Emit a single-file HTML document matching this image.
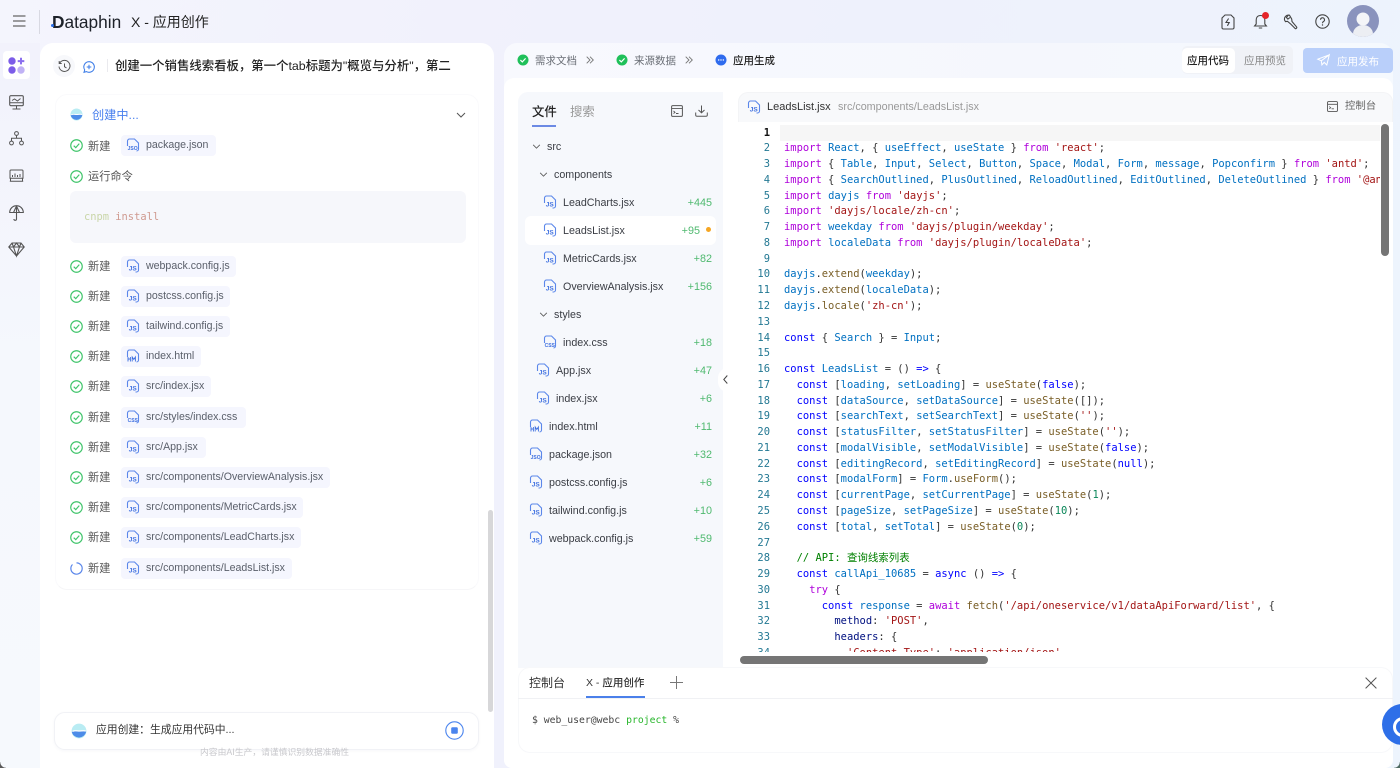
<!DOCTYPE html>
<html lang="zh-CN">
<head>
<meta charset="utf-8">
<title>Dataphin X - 应用创作</title>
<style>
*{box-sizing:border-box}
html,body{margin:0;padding:0;width:1400px;height:768px;overflow:hidden}
body{position:relative;font-family:"Liberation Sans","Noto Sans CJK SC",sans-serif;color:#333;
background:linear-gradient(100deg,#f4f5fd 0%,#f1f1fc 30%,#eef1fc 60%,#edf4fd 100%)}
.a{position:absolute;white-space:nowrap}
svg{display:block;overflow:visible}
.leftbg{position:absolute;left:0;top:43px;width:40px;height:725px;background:linear-gradient(180deg,#f2f2fc,#f5f8fd 45%,#f6f9fd)}
.panel-l{position:absolute;left:40px;top:43px;width:454px;height:725px;background:#fff;border-radius:13px 13px 0 0}
.panel-r{position:absolute;left:504px;top:43px;width:889px;height:725px;border-radius:13px 13px 8px 8px;background:linear-gradient(90deg,#f8f9fe,#f5f7fd 60%,#f5f9fe)}
.panel-w{position:absolute;left:504px;top:78px;width:889px;height:690px;background:#fff;border-radius:10px 10px 8px 8px}
.card{position:absolute;left:55px;top:94px;width:424px;height:496px;border:1px solid #fafafc;border-bottom-color:#f6f6f8;border-radius:12px}
.lbl{font-size:11.2px;color:#555;transform:translateY(1px)}
.chip{position:absolute;left:121px;height:21px;background:#f5f6fe;border-radius:4px;font-size:10.6px;color:#5a5f6a;line-height:20.500px;padding-left:25px;white-space:nowrap}
.chip svg{position:absolute;left:5px;top:3px}
.chk{position:absolute;left:70px}
.tree{position:absolute;left:518px;top:92px;width:205px;height:576px;background:#f6f8fc;border-radius:10px 0 0 0}
.rowhl{position:absolute;left:525px;top:216px;width:191px;height:29px;background:#fff;border-radius:6px}
.fn{position:absolute;font-size:10.7px;color:#3a3d44;white-space:nowrap;line-height:14px;transform:translateY(1px)}
.fi{position:absolute}
.ct{position:absolute;font-size:10.8px;color:#4fb96f;white-space:nowrap;line-height:14px;text-align:right;transform:translateY(1px)}
.codehead{position:absolute;left:738px;top:92px;width:655px;height:30px;background:#f8f9fb;border-radius:10px 10px 0 0;border:1px solid #f3f4f6;border-bottom:none}
.codeclip{position:absolute;left:738px;top:125.6px;width:642px;height:526.5px;overflow:hidden}
.nums,.code{position:absolute;top:0;margin:0;font-family:"DejaVu Sans Mono","Liberation Mono",monospace;font-size:10.46px;line-height:15.76px;white-space:pre}
.nums{left:0;width:32px;text-align:right;color:#237893}
.nums b{color:#111;font-weight:700}
.code{left:46px;color:#333}
.k{color:#af00db}.b{color:#0000ff}.v{color:#0070c1}.w{color:#001080}.s{color:#a31515}.f{color:#795e26}.c{color:#008000}.n{color:#098658}
</style>
</head>
<body>
<svg width="0" height="0" style="position:absolute">
<symbol id="ok" viewBox="0 0 14 14"><circle cx="7" cy="7" r="6.2" fill="none" stroke="#3fc46a" stroke-width="1.250"/><path d="M4 7.200l2.200 2.100 3.800-4.300" fill="none" stroke="#3fc46a" stroke-width="1.250"/></symbol>
<symbol id="js" viewBox="0 0 14 14"><path d="M1.500 8V3a2 2 0 0 1 2-2H8.500L12.500 5V11a2 2 0 0 1-2 2H9.500" fill="none" stroke="#5b87ea" stroke-width="1.100"/><text x="2.800" y="11.400" font-family="Liberation Sans" font-size="6.500" font-weight="700" fill="#3f70e0">JS</text></symbol>
<symbol id="jn" viewBox="0 0 14 14"><path d="M1.500 8V3a2 2 0 0 1 2-2H8.500L12.500 5V11a2 2 0 0 1-2 2" fill="none" stroke="#5b87ea" stroke-width="1.100"/><text x="1.600" y="12" font-family="Liberation Sans" font-size="5" font-weight="700" fill="#3f70e0">JSO</text></symbol>
<symbol id="ht" viewBox="0 0 14 14"><path d="M1.500 8V3a2 2 0 0 1 2-2H8.500L12.500 5V11a2 2 0 0 1-2 2" fill="none" stroke="#5b87ea" stroke-width="1.100"/><path d="M2 12.500V8M2 10h2.400M4.400 12.500V8M6.200 12.500V8l1.600 2.400L9.400 8v4.500" fill="none" stroke="#3f70e0" stroke-width=".9"/></symbol>
<symbol id="cs" viewBox="0 0 14 14"><path d="M1.500 8V3a2 2 0 0 1 2-2H8.500L12.500 5V11a2 2 0 0 1-2 2" fill="none" stroke="#5b87ea" stroke-width="1.100"/><text x="1.600" y="12" font-family="Liberation Sans" font-size="5" font-weight="700" fill="#3f70e0">CSS</text></symbol>
<symbol id="ch" viewBox="0 0 10 6"><path d="M1 1l4 4 4-4" fill="none" stroke="#555" stroke-width="1"/></symbol>
<symbol id="glb" viewBox="0 0 16 16"><circle cx="8" cy="8" r="7.400" fill="#b9ecf3"/><path d="M.8 9c2.500-2 4.500-.6 7.200-.6S13 7.600 15.200 8.800 A7.400 7.400 0 0 1 .8 9z" fill="#4d8ce8"/><path d="M1.500 8.400c2.500-1.200 4.500-.4 6.700-.4s4.600-.7 6.500 0" stroke="#fff" stroke-width="1.200" fill="none"/></symbol>
</svg>

<!-- top bar -->
<svg class="a" style="left:13px;top:15px" width="13" height="12"><path d="M0 1h12.500M0 6h12.500M0 11h12.500" stroke="#666" stroke-width="1.200"/></svg>
<div class="a" style="left:39px;top:10px;width:1px;height:24px;background:#d8d9e2"></div>
<div class="a" style="left:52px;top:10px;font-size:17.300px;line-height:24px;color:#1d2129;"><span style="font-weight:700;">D</span>ataphin</div>
<div class="a" style="left:51px;top:24px;width:3px;height:3px;border-radius:50%;background:#2a6ee8"></div>
<div class="a" style="left:131px;top:11px;font-size:14px;line-height:22px;color:#222">X - 应用创作</div>

<svg class="a" style="left:1221px;top:14px" width="14" height="16" viewBox="0 0 14 16"><path d="M4 1h6l3 3v9.500A1.500 1.500 0 0 1 11.500 15h-9A1.500 1.500 0 0 1 1 13.500V4z" fill="none" stroke="#444" stroke-width="1.100"/><path d="M7.600 4.500L5 8.500h3.200L6.400 11.800" fill="none" stroke="#444" stroke-width="1.100"/></svg>
<svg class="a" style="left:1253px;top:13px" width="15" height="17" viewBox="0 0 15 17"><path d="M7.500 2.500c-3 0-4.300 2-4.300 4.500v4l-1.600 2h11.800l-1.600-2V7c0-2.500-1.300-4.500-4.300-4.500zM5.800 15h3.400" fill="none" stroke="#444" stroke-width="1.100"/></svg>
<div class="a" style="left:1262px;top:12px;width:7px;height:7px;border-radius:50%;background:#e5252a"></div>
<svg class="a" style="left:1283px;top:14px" width="16" height="16" viewBox="0 0 16 16"><path d="M6.500 1.200a4 4 0 0 0-4.800 5.200l.8 1.200 2-.3 3.300 2.800 4.200 4.300c1 .8 2.300-.6 1.500-1.600L9 7.500 8.700 5 6.500 1.200z M5.200 1.300L3.400 3.500l1.500 1.600L7 3.500" fill="none" stroke="#444" stroke-width="1.100"/></svg>
<svg class="a" style="left:1315px;top:14px" width="15" height="15" viewBox="0 0 15 15"><circle cx="7.500" cy="7.500" r="6.700" fill="none" stroke="#444" stroke-width="1.100"/><path d="M5.500 5.800a2 2 0 1 1 3 1.700c-.7.400-1 .8-1 1.700" fill="none" stroke="#444" stroke-width="1.100"/><circle cx="7.500" cy="11" r=".7" fill="#444"/></svg>
<svg class="a" style="left:1347px;top:5px" width="32" height="32" viewBox="0 0 32 32"><defs><clipPath id="av"><circle cx="16" cy="16" r="16"/></clipPath></defs><circle cx="16" cy="16" r="16" fill="#8a93bd"/><g clip-path="url(#av)"><circle cx="16" cy="14" r="6.500" fill="#f4f5f8"/><ellipse cx="16" cy="29" rx="10" ry="9" fill="#eceef3"/></g></svg>

<!-- left rail -->
<div class="leftbg"></div>
<div class="a" style="left:3px;top:51px;width:27px;height:28px;background:#fff;border-radius:4px"></div>
<svg class="a" style="left:8px;top:57px" width="17" height="17" viewBox="0 0 17 17"><circle cx="4" cy="4" r="3.700" fill="#7c5ce8"/><path d="M13 .8v6.600M9.700 4.100h6.600" stroke="#8b6fee" stroke-width="2"/><circle cx="4" cy="13" r="3.700" fill="#7c5ce8"/><circle cx="13" cy="13" r="3.700" fill="#c0b2f5"/></svg>
<svg class="a" style="left:9px;top:95px" width="15" height="15" viewBox="0 0 15 15"><rect x=".7" y=".7" width="13.600" height="10" rx="1.200" fill="none" stroke="#555" stroke-width="1.100"/><path d="M1 7.800h13M7.500 11v2.500M3.500 14h8M3 5.500l2.500-1.500 3 2 3-2.500" fill="none" stroke="#555" stroke-width="1"/></svg>
<svg class="a" style="left:9px;top:131px" width="15" height="15" viewBox="0 0 15 15"><circle cx="7.500" cy="2.500" r="1.900" fill="none" stroke="#555"/><circle cx="2.500" cy="12" r="1.900" fill="none" stroke="#555"/><circle cx="12.500" cy="12" r="1.900" fill="none" stroke="#555"/><path d="M7.500 4.500V7M2.500 10V7.200h10V10" fill="none" stroke="#555"/></svg>
<svg class="a" style="left:9px;top:169px" width="15" height="13" viewBox="0 0 15 13"><path d="M1 9V2a1 1 0 0 1 1-1h11a1 1 0 0 1 1 1v7M.5 9.200h14M.8 12.300h13.400M1.500 9.500v2.700M13.500 9.500v2.700M3.500 8V6M6 8V4.500M8.500 8V6M11 8V5" fill="none" stroke="#555" stroke-width="1"/></svg>
<svg class="a" style="left:9px;top:205px" width="15" height="16" viewBox="0 0 15 16"><path d="M.7 7.500a6.800 6.800 0 0 1 13.600 0zM7.500.7V14a1.300 1.300 0 0 1-2.600 0M4.500 7.500L7.500 1l3 6.500" fill="none" stroke="#555" stroke-width="1.100"/></svg>
<svg class="a" style="left:8px;top:242px" width="17" height="15" viewBox="0 0 17 15"><path d="M4 1h9l3.200 4-7.700 9L.8 5zM.8 5h15.400M5.500 5l3 9 3-9M4 1l1.500 4 3-4 3 4L13 1" fill="none" stroke="#555" stroke-width="1.100"/></svg>

<!-- left panel -->
<div class="panel-l"></div>
<div class="a" style="left:53px;top:55px;width:22px;height:22px;border-radius:50%;background:#f7f8fb"></div>
<svg class="a" style="left:58px;top:60px" width="13" height="13" viewBox="0 0 13 13"><path d="M1.800 3A5.500 5.500 0 1 1 1 6.500M1.200 1v2.500h2.500M6.500 3.500v3.200l2 1.300" fill="none" stroke="#555" stroke-width="1"/></svg>
<svg class="a" style="left:83px;top:60.500px" width="12" height="12" viewBox="0 0 12 12"><path d="M6 .7a5.300 5.300 0 1 1-2.600 9.900L1 11.300l.7-2.400A5.300 5.300 0 0 1 6 .7zM6 3.700v4.600M3.700 6h4.600" fill="none" stroke="#3f7ee8" stroke-width="1.050"/></svg>
<div class="a" style="left:107px;top:59px;width:1px;height:13px;background:#eaeaee"></div>
<div class="a" style="left:115px;top:56px;font-size:12.400px;line-height:20px;color:#222;font-weight:500">创建一个销售线索看板，第一个tab标题为"概览与分析"，第二</div>

<div class="card"></div>
<svg class="a" style="left:70px;top:108px" width="13" height="13"><use href="#glb"/></svg>
<div class="a" style="left:92px;top:106px;font-size:12.200px;line-height:18px;color:#4a80ee">创建中...</div>
<svg class="a" style="left:456px;top:112px" width="10" height="6"><use href="#ch"/></svg>

<svg class="chk a" style="top:139px" width="13" height="13"><use href="#ok"/></svg>
<div class="a lbl" style="left:88px;top:138px;line-height:16px">新建</div>
<div class="chip" style="top:135px;width:95px"><svg width="14" height="14"><use href="#jn"/></svg>package.json</div>

<svg class="chk a" style="top:170px" width="13" height="13"><use href="#ok"/></svg>
<div class="a lbl" style="left:88px;top:168px;line-height:16px">运行命令</div>
<div class="a" style="left:70px;top:191px;width:396px;height:52px;background:#f6f7fb;border-radius:6px"></div>
<div class="a" style="left:84px;top:210px;font-family:'DejaVu Sans Mono',monospace;font-size:10.400px;line-height:14px"><span style="color:#c9d6a8">cnpm</span> <span style="color:#cf9a90">install</span></div>

<svg class="chk a" style="top:260px" width="13" height="13"><use href="#ok"/></svg><div class="a lbl" style="left:88px;top:258px;line-height:16px">新建</div>
<div class="chip" style="top:256px;width:115px"><svg width="14" height="14"><use href="#js"/></svg>webpack.config.js</div>
<svg class="chk a" style="top:290px" width="13" height="13"><use href="#ok"/></svg><div class="a lbl" style="left:88px;top:288px;line-height:16px">新建</div>
<div class="chip" style="top:286px;width:109px"><svg width="14" height="14"><use href="#js"/></svg>postcss.config.js</div>
<svg class="chk a" style="top:320px" width="13" height="13"><use href="#ok"/></svg><div class="a lbl" style="left:88px;top:318px;line-height:16px">新建</div>
<div class="chip" style="top:316px;width:109px"><svg width="14" height="14"><use href="#js"/></svg>tailwind.config.js</div>
<svg class="chk a" style="top:350px" width="13" height="13"><use href="#ok"/></svg><div class="a lbl" style="left:88px;top:348px;line-height:16px">新建</div>
<div class="chip" style="top:346px;width:80px"><svg width="14" height="14"><use href="#ht"/></svg>index.html</div>
<svg class="chk a" style="top:380px" width="13" height="13"><use href="#ok"/></svg><div class="a lbl" style="left:88px;top:378px;line-height:16px">新建</div>
<div class="chip" style="top:376px;width:90px"><svg width="14" height="14"><use href="#js"/></svg>src/index.jsx</div>
<svg class="chk a" style="top:411px" width="13" height="13"><use href="#ok"/></svg><div class="a lbl" style="left:88px;top:409px;line-height:16px">新建</div>
<div class="chip" style="top:407px;width:125px"><svg width="14" height="14"><use href="#cs"/></svg>src/styles/index.css</div>
<svg class="chk a" style="top:441px" width="13" height="13"><use href="#ok"/></svg><div class="a lbl" style="left:88px;top:439px;line-height:16px">新建</div>
<div class="chip" style="top:437px;width:85px"><svg width="14" height="14"><use href="#js"/></svg>src/App.jsx</div>
<svg class="chk a" style="top:471px" width="13" height="13"><use href="#ok"/></svg><div class="a lbl" style="left:88px;top:469px;line-height:16px">新建</div>
<div class="chip" style="top:467px;width:209px"><svg width="14" height="14"><use href="#js"/></svg>src/components/OverviewAnalysis.jsx</div>
<svg class="chk a" style="top:501px" width="13" height="13"><use href="#ok"/></svg><div class="a lbl" style="left:88px;top:499px;line-height:16px">新建</div>
<div class="chip" style="top:497px;width:182px"><svg width="14" height="14"><use href="#js"/></svg>src/components/MetricCards.jsx</div>
<svg class="chk a" style="top:531px" width="13" height="13"><use href="#ok"/></svg><div class="a lbl" style="left:88px;top:529px;line-height:16px">新建</div>
<div class="chip" style="top:527px;width:180px"><svg width="14" height="14"><use href="#js"/></svg>src/components/LeadCharts.jsx</div>
<svg class="chk a" style="top:562px" width="13" height="13" viewBox="0 0 14 14"><path d="M7 .9A6.100 6.100 0 1 1 2.700 2.700" fill="none" stroke="#5b87ea" stroke-width="1.300"/></svg><div class="a lbl" style="left:88px;top:560px;line-height:16px">新建</div>
<div class="chip" style="top:558px;width:171px"><svg width="14" height="14"><use href="#js"/></svg>src/components/LeadsList.jsx</div>

<div class="a" style="left:488px;top:510px;width:5px;height:202px;background:#d7d7d9;border-radius:3px"></div>

<div class="a" style="left:54px;top:712px;width:425px;height:38px;background:#fff;border:1px solid #f1f2f6;border-radius:11px;box-shadow:0 1px 3px rgba(30,40,90,.04)"></div>
<svg class="a" style="left:71px;top:723px" width="16" height="16"><use href="#glb"/></svg>
<div class="a" style="left:96px;top:722px;font-size:10.800px;line-height:17px;color:#333">应用创建：生成应用代码中...</div>
<svg class="a" style="left:445px;top:721px" width="19" height="19" viewBox="0 0 19 19"><circle cx="9.500" cy="9.500" r="8.700" fill="none" stroke="#4a84ee" stroke-width="1.100"/><rect x="6.200" y="6.200" width="6.600" height="6.600" rx="1.200" fill="#4a84ee"/></svg>
<div class="a" style="left:200px;top:746px;font-size:8.800px;line-height:13px;color:#c9c9cd">内容由AI生产，请谨慎识别数据准确性</div>

<!-- right panel -->
<div class="panel-r"></div>
<div class="panel-w"></div>

<svg class="a" style="left:517px;top:54px" width="12" height="12" viewBox="0 0 12 12"><circle cx="6" cy="6" r="5.500" fill="#1fc05a"/><path d="M3.400 6.100l1.900 1.800 3.300-3.500" fill="none" stroke="#fff" stroke-width="1.200"/></svg>
<div class="a" style="left:535px;top:52.500px;font-size:10.500px;line-height:16px;color:#6b6f77">需求文档</div>
<svg class="a" style="left:586px;top:56px" width="8" height="8" viewBox="0 0 8 8"><path d="M.7.700L4 4 .7 7.300M4 .7L7.300 4 4 7.300" fill="none" stroke="#777" stroke-width=".9"/></svg>
<svg class="a" style="left:616px;top:54px" width="12" height="12" viewBox="0 0 12 12"><circle cx="6" cy="6" r="5.500" fill="#1fc05a"/><path d="M3.400 6.100l1.900 1.800 3.300-3.500" fill="none" stroke="#fff" stroke-width="1.200"/></svg>
<div class="a" style="left:634px;top:52.500px;font-size:10.500px;line-height:16px;color:#6b6f77">来源数据</div>
<svg class="a" style="left:685px;top:56px" width="8" height="8" viewBox="0 0 8 8"><path d="M.7.700L4 4 .7 7.300M4 .7L7.300 4 4 7.300" fill="none" stroke="#777" stroke-width=".9"/></svg>
<svg class="a" style="left:715px;top:54px" width="12" height="12" viewBox="0 0 12 12"><circle cx="6" cy="6" r="5.500" fill="#2f6bee"/><circle cx="3.700" cy="6" r=".7" fill="#fff"/><circle cx="6" cy="6" r=".7" fill="#fff"/><circle cx="8.300" cy="6" r=".7" fill="#fff"/></svg>
<div class="a" style="left:733px;top:52.500px;font-size:10.500px;line-height:16px;color:#222;font-weight:500">应用生成</div>

<div class="a" style="left:1182px;top:46px;width:111px;height:28px;background:#f0f2f7;border-radius:5px"></div>
<div class="a" style="left:1182px;top:48px;width:53px;height:25px;background:#fff;border-radius:5px"></div>
<div class="a" style="left:1187px;top:53px;font-size:10.500px;line-height:16px;color:#222;font-weight:500">应用代码</div>
<div class="a" style="left:1244px;top:53px;font-size:10.500px;line-height:16px;color:#888">应用预览</div>
<div class="a" style="left:1303px;top:48px;width:90px;height:25px;background:#b9cffa;border-radius:4px"></div>
<svg class="a" style="left:1317px;top:54px" width="13" height="13" viewBox="0 0 13 13"><path d="M12.300.8L.8 5.200l3.500 1.600L12.300.8 9.800 11l-2.600-2.600-2.300 2.500-.6-4" fill="none" stroke="#fff" stroke-width="1"/></svg>
<div class="a" style="left:1337px;top:54px;font-size:10.500px;line-height:16px;color:#fff">应用发布</div>

<!-- tree -->
<div class="tree"></div>
<div class="a" style="left:532px;top:103px;font-size:12.400px;line-height:18px;color:#222;font-weight:500">文件</div>
<div class="a" style="left:570px;top:103px;font-size:12.400px;line-height:18px;color:#999">搜索</div>
<div class="a" style="left:532px;top:125px;width:24px;height:2px;background:#6c8ae4"></div>
<svg class="a" style="left:671px;top:105px" width="12" height="12" viewBox="0 0 12 12"><rect x=".6" y=".6" width="10.800" height="10.800" rx="1.200" fill="none" stroke="#555"/><path d="M.6 3.600h10.800M2.500 6l1.500 1.300L2.500 8.500M5 8.500h2.500" fill="none" stroke="#555" stroke-width=".9"/></svg>
<svg class="a" style="left:695px;top:105px" width="13" height="12" viewBox="0 0 13 12"><path d="M6.500.5v7M3.500 5l3 2.800L9.500 5M.7 7.500v2.500c0 .9.500 1.300 1.300 1.300h9c.8 0 1.300-.4 1.300-1.300V7.500" fill="none" stroke="#555"/></svg>

<svg class="a" style="left:532px;top:144px" width="9" height="5"><use href="#ch"/></svg><div class="fn" style="left:547px;top:139px">src</div>
<svg class="a" style="left:539px;top:172px" width="9" height="5"><use href="#ch"/></svg><div class="fn" style="left:554px;top:167px">components</div>

<svg class="fi" style="left:543px;top:195px" width="14" height="14"><use href="#js"/></svg><div class="fn" style="left:563px;top:195px">LeadCharts.jsx</div><div class="ct" style="right:688px;top:195px">+445</div>
<div class="rowhl"></div>
<svg class="fi" style="left:543px;top:223px" width="14" height="14"><use href="#js"/></svg><div class="fn" style="left:563px;top:223px">LeadsList.jsx</div><div class="ct" style="right:700px;top:223px">+95</div>
<div class="a" style="left:706px;top:227px;width:5px;height:5px;border-radius:50%;background:#f5a623"></div>
<svg class="fi" style="left:543px;top:251px" width="14" height="14"><use href="#js"/></svg><div class="fn" style="left:563px;top:251px">MetricCards.jsx</div><div class="ct" style="right:688px;top:251px">+82</div>
<svg class="fi" style="left:543px;top:279px" width="14" height="14"><use href="#js"/></svg><div class="fn" style="left:563px;top:279px">OverviewAnalysis.jsx</div><div class="ct" style="right:688px;top:279px">+156</div>
<svg class="a" style="left:539px;top:312px" width="9" height="5"><use href="#ch"/></svg><div class="fn" style="left:554px;top:307px">styles</div>
<svg class="fi" style="left:543px;top:335px" width="14" height="14"><use href="#cs"/></svg><div class="fn" style="left:563px;top:335px">index.css</div><div class="ct" style="right:688px;top:335px">+18</div>
<svg class="fi" style="left:536px;top:363px" width="14" height="14"><use href="#js"/></svg><div class="fn" style="left:556px;top:363px">App.jsx</div><div class="ct" style="right:688px;top:363px">+47</div>
<svg class="fi" style="left:536px;top:391px" width="14" height="14"><use href="#js"/></svg><div class="fn" style="left:556px;top:391px">index.jsx</div><div class="ct" style="right:688px;top:391px">+6</div>
<svg class="fi" style="left:529px;top:419px" width="14" height="14"><use href="#ht"/></svg><div class="fn" style="left:549px;top:419px">index.html</div><div class="ct" style="right:688px;top:419px">+11</div>
<svg class="fi" style="left:529px;top:447px" width="14" height="14"><use href="#jn"/></svg><div class="fn" style="left:549px;top:447px">package.json</div><div class="ct" style="right:688px;top:447px">+32</div>
<svg class="fi" style="left:529px;top:475px" width="14" height="14"><use href="#js"/></svg><div class="fn" style="left:549px;top:475px">postcss.config.js</div><div class="ct" style="right:688px;top:475px">+6</div>
<svg class="fi" style="left:529px;top:503px" width="14" height="14"><use href="#js"/></svg><div class="fn" style="left:549px;top:503px">tailwind.config.js</div><div class="ct" style="right:688px;top:503px">+10</div>
<svg class="fi" style="left:529px;top:531px" width="14" height="14"><use href="#js"/></svg><div class="fn" style="left:549px;top:531px">webpack.config.js</div><div class="ct" style="right:688px;top:531px">+59</div>

<div class="a" style="left:718px;top:368px;width:20px;height:24px;background:#fff;border-radius:10px 0 0 10px"></div>
<svg class="a" style="left:723px;top:375px" width="5" height="9" viewBox="0 0 5 9"><path d="M4.300.5L.8 4.500l3.500 4" fill="none" stroke="#444"/></svg>

<!-- code -->
<div class="codehead"></div>
<svg class="fi" style="left:747px;top:100px" width="14" height="14"><use href="#js"/></svg>
<div class="a" style="left:767px;top:100px;font-size:11px;line-height:14px;color:#333;font-weight:500">LeadsList.jsx</div>
<div class="a" style="left:838px;top:100px;font-size:10.750px;line-height:14px;color:#999">src/components/LeadsList.jsx</div>
<svg class="a" style="left:1327px;top:101px" width="11" height="11" viewBox="0 0 12 12"><rect x=".6" y=".6" width="10.800" height="10.800" rx="1.200" fill="none" stroke="#555"/><path d="M.6 3.600h10.800M2.500 6l1.500 1.300L2.500 8.500M5 8.500h2.500" fill="none" stroke="#555" stroke-width=".9"/></svg>
<div class="a" style="left:1345px;top:99px;font-size:10.400px;line-height:15px;color:#666">控制台</div>

<div class="a" style="left:780px;top:125px;width:600px;height:15.500px;background:#f6f6f6"></div>
<div class="codeclip">
<div class="nums"><b>1</b>
2
3
4
5
6
7
8
9
10
11
12
13
14
15
16
17
18
19
20
21
22
23
24
25
26
27
28
29
30
31
32
33
34</div>
<pre class="code">

<span class="k">import</span> <span class="v">React</span>, { <span class="v">useEffect</span>, <span class="v">useState</span> } <span class="k">from</span> <span class="s">'react'</span>;
<span class="k">import</span> { <span class="v">Table</span>, <span class="v">Input</span>, <span class="v">Select</span>, <span class="v">Button</span>, <span class="v">Space</span>, <span class="v">Modal</span>, <span class="v">Form</span>, <span class="v">message</span>, <span class="v">Popconfirm</span> } <span class="k">from</span> <span class="s">'antd'</span>;
<span class="k">import</span> { <span class="v">SearchOutlined</span>, <span class="v">PlusOutlined</span>, <span class="v">ReloadOutlined</span>, <span class="v">EditOutlined</span>, <span class="v">DeleteOutlined</span> } <span class="k">from</span> <span class="s">'@ant-design/icons'</span>;
<span class="k">import</span> <span class="v">dayjs</span> <span class="k">from</span> <span class="s">'dayjs'</span>;
<span class="k">import</span> <span class="s">'dayjs/locale/zh-cn'</span>;
<span class="k">import</span> <span class="v">weekday</span> <span class="k">from</span> <span class="s">'dayjs/plugin/weekday'</span>;
<span class="k">import</span> <span class="v">localeData</span> <span class="k">from</span> <span class="s">'dayjs/plugin/localeData'</span>;

<span class="v">dayjs</span>.<span class="f">extend</span>(<span class="v">weekday</span>);
<span class="v">dayjs</span>.<span class="f">extend</span>(<span class="v">localeData</span>);
<span class="v">dayjs</span>.<span class="f">locale</span>(<span class="s">'zh-cn'</span>);

<span class="b">const</span> { <span class="v">Search</span> } = <span class="v">Input</span>;

<span class="b">const</span> <span class="v">LeadsList</span> = () <span class="b">=&gt;</span> {
  <span class="b">const</span> [<span class="v">loading</span>, <span class="v">setLoading</span>] = <span class="f">useState</span>(<span class="b">false</span>);
  <span class="b">const</span> [<span class="v">dataSource</span>, <span class="v">setDataSource</span>] = <span class="f">useState</span>([]);
  <span class="b">const</span> [<span class="v">searchText</span>, <span class="v">setSearchText</span>] = <span class="f">useState</span>(<span class="s">''</span>);
  <span class="b">const</span> [<span class="v">statusFilter</span>, <span class="v">setStatusFilter</span>] = <span class="f">useState</span>(<span class="s">''</span>);
  <span class="b">const</span> [<span class="v">modalVisible</span>, <span class="v">setModalVisible</span>] = <span class="f">useState</span>(<span class="b">false</span>);
  <span class="b">const</span> [<span class="v">editingRecord</span>, <span class="v">setEditingRecord</span>] = <span class="f">useState</span>(<span class="b">null</span>);
  <span class="b">const</span> [<span class="v">modalForm</span>] = <span class="v">Form</span>.<span class="f">useForm</span>();
  <span class="b">const</span> [<span class="v">currentPage</span>, <span class="v">setCurrentPage</span>] = <span class="f">useState</span>(<span class="n">1</span>);
  <span class="b">const</span> [<span class="v">pageSize</span>, <span class="v">setPageSize</span>] = <span class="f">useState</span>(<span class="n">10</span>);
  <span class="b">const</span> [<span class="v">total</span>, <span class="v">setTotal</span>] = <span class="f">useState</span>(<span class="n">0</span>);

  <span class="c">// API: 查询线索列表</span>
  <span class="b">const</span> <span class="v">callApi_10685</span> = <span class="b">async</span> () <span class="b">=&gt;</span> {
    <span class="k">try</span> {
      <span class="b">const</span> <span class="v">response</span> = <span class="k">await</span> <span class="f">fetch</span>(<span class="s">'/api/oneservice/v1/dataApiForward/list'</span>, {
        <span class="w">method</span>: <span class="s">'POST'</span>,
        <span class="w">headers</span>: {
          <span class="s">'Content-Type'</span>: <span class="s">'application/json'</span>
</pre>
</div>
<div class="a" style="left:1381px;top:124px;width:8px;height:132px;background:#757575;border-radius:4px"></div>
<div class="a" style="left:740px;top:656px;width:248px;height:8px;background:#757575;border-radius:4px"></div>

<!-- console -->
<div class="a" style="left:518px;top:667px;width:875px;height:86px;background:#fff;border:1px solid #f7f8fa;border-radius:12px"></div>
<div class="a" style="left:518px;top:698px;width:875px;height:1px;background:#f0f1f4"></div>
<div class="a" style="left:529px;top:675px;font-size:12px;line-height:17px;color:#333">控制台</div>
<div class="a" style="left:586px;top:676px;font-size:10.500px;line-height:15px;color:#333;font-weight:500">X - 应用创作</div>
<div class="a" style="left:586px;top:696px;width:59px;height:2px;background:#4a80ea"></div>
<svg class="a" style="left:670px;top:676px" width="13" height="13"><path d="M6.500 0v13M0 6.500h13" stroke="#777" stroke-width="1"/></svg>
<svg class="a" style="left:1365px;top:677px" width="12" height="12"><path d="M.6.600l10.800 10.800M11.400.600L.6 11.400" stroke="#555" stroke-width="1"/></svg>
<div class="a" style="left:532px;top:714px;font-family:'DejaVu Sans Mono',monospace;font-size:9.780px;line-height:14px;color:#444">$ web_user@webc <span style="color:#28b62c">project</span> %</div>

<div class="a" style="left:1382px;top:704px;width:41px;height:41px;border-radius:50%;background:#2e6fe8"></div>
<div class="a" style="left:1393px;top:717px;width:20px;height:20px;border-radius:50%;border:3px solid #fff"></div>

<!-- window corners -->
<div class="a" style="left:0;top:762px;width:6px;height:6px;background:radial-gradient(circle at 100% 0,transparent 5.500px,#5a5a5a 6px)"></div>
<div class="a" style="right:0;top:762px;width:6px;height:6px;background:radial-gradient(circle at 0 0,transparent 5.500px,#4f6a62 6px)"></div>
</body>
</html>
